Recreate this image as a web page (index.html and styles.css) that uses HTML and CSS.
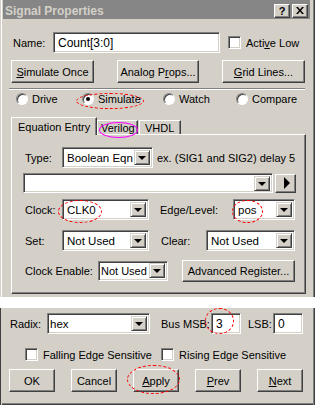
FILE: index.html
```html
<!DOCTYPE html>
<html>
<head>
<meta charset="utf-8">
<link rel="stylesheet" href="styles.css">
</head>
<body>
<div class="win">
  <div class="upper">
    <div class="titlebar">
      <span class="title">Signal Properties</span>
      <div class="tbtns">
        <span class="tbtn q">?</span>
        <span class="tbtn"><svg width="8" height="7" viewBox="0 0 8 7"><path d="M0 0h2l2 2.5L6 0h2L5 3.5 8 7H6L4 4.5 2 7H0l3-3.5z" fill="#000"/></svg></span>
      </div>
    </div>
    <div class="row name-row">
      <span class="lbl w-name">Name:</span>
      <div class="field name-field">Count[3:0]</div>
      <span class="check ml8"></span><span class="ml5">Acti<u>v</u>e Low</span>
    </div>
    <div class="row btn-row">
      <div class="btn b-sim"><span><u>S</u>imulate Once</span></div>
      <div class="btn b-ana"><span>Analog P<u>r</u>ops...</span></div>
      <div class="btn b-grid"><span><u>G</u>rid Lines...</span></div>
    </div>
    <div class="sep"></div>
    <div class="row radio-row">
      <div class="ritem r-drive"><span class="radio"></span>Drive</div>
      <div class="ritem r-sim"><span class="radio on"></span>Simulate</div>
      <div class="ritem r-watch"><span class="radio"></span>Watch</div>
      <div class="ritem"><span class="radio"></span>Compare</div>
    </div>
    <div class="tabs">
      <div class="tab sel">Equation Entry</div>
      <div class="tab t-ver">Verilog</div>
      <div class="tab t-vhdl">VHDL</div>
    </div>
    <div class="panel">
      <div class="prow type-row">
        <span class="lbl w-type">Type:</span>
        <div class="combo c-type"><span class="ctext">Boolean Eqn</span><span class="arrow"></span></div>
        <span class="ml4">ex. (SIG1 and SIG2) delay 5</span>
      </div>
      <div class="prow wide-row">
        <div class="combo c-wide"><span class="ctext"></span><span class="arrow"></span></div>
        <div class="btn play"><span class="tri-r"></span></div>
      </div>
      <div class="prow clock-row">
        <span class="lbl w-type">Clock:</span>
        <div class="combo c-clk"><span class="ctext">CLK0</span><span class="arrow"></span></div>
        <span class="lbl w-edge ml11">Edge/Level:</span>
        <div class="combo c-edge"><span class="ctext">pos</span><span class="arrow"></span></div>
      </div>
      <div class="prow set-row">
        <span class="lbl w-type">Set:</span>
        <div class="combo c-clk"><span class="ctext">Not Used</span><span class="arrow"></span></div>
        <span class="lbl w-clear ml12">Clear:</span>
        <div class="combo c-clear"><span class="ctext">Not Used</span><span class="arrow"></span></div>
      </div>
      <div class="prow ce-row">
        <span class="lbl w-ce">Clock Enable:</span>
        <div class="combo c-ce"><span class="ctext">Not Used</span><span class="arrow"></span></div>
        <div class="btn b-adv"><span>Advanced Register...</span></div>
      </div>
    </div>
  </div>
  <div class="gap"></div>
  <div class="lower">
    <div class="row radix-row">
      <span class="lbl w-radix">Radix:</span>
      <div class="combo c-radix"><span class="ctext">hex</span><span class="arrow"></span></div>
      <span class="lbl w-msb ml11">Bus MSB:</span>
      <div class="field f-num">3</div>
      <span class="lbl w-lsb ml7">LSB:</span>
      <div class="field f-num">0</div>
    </div>
    <div class="row chk-row">
      <span class="check ml25"></span><span class="ml5 w-fall">Falling Edge Sensitive</span>
      <span class="check"></span><span class="ml5">Rising Edge Sensitive</span>
    </div>
    <div class="row bot-btns">
      <div class="btn bb"><span>OK</span></div>
      <div class="btn bb"><span>Cancel</span></div>
      <div class="btn bb"><span><u>A</u>pply</span></div>
      <div class="btn bb"><span><u>P</u>rev</span></div>
      <div class="btn bb"><span><u>N</u>ext</span></div>
    </div>
  </div>
  <div class="ring red e-sim"></div>
  <div class="ring mag e-ver"></div>
  <div class="ring red e-clk"></div>
  <div class="ring red e-pos"></div>
  <div class="ring red e-msb"></div>
  <div class="ring red e-apply"></div>
</div>
</body>
</html>
```
FILE: styles.css
```css
html, body { margin: 0; padding: 0; background: #fff; }
.win {
  position: relative;
  width: 315px;
  height: 405px;
  font: 11px "Liberation Sans", Arial, sans-serif;
  color: #000;
  background: #fff;
  white-space: nowrap;
}
.upper {
  height: 297px;
  background: #d4d0c8;
  box-shadow: inset 1px 0 #d4d0c8, inset 2px 0 #fff, inset -1px 0 #404040, inset -2px 0 #808080;
  overflow: hidden;
}
.gap { height: 10px; background: #fff; }
.lower {
  height: 98px;
  background: #d4d0c8;
  box-sizing: border-box;
  border-top: 1px solid #fff;
  box-shadow: inset 1px 0 #404040, inset 2px 0 #d4d0c8, inset -1px 0 #404040, inset -2px 0 #808080, inset 0 -1px #404040, inset 0 -2px #808080;
  padding-top: 5px;
}
.titlebar {
  height: 19px;
  margin: 0 5px 1px 3px;
  background: #868686;
  display: flex;
  align-items: center;
  justify-content: space-between;
}
.title { color: #d4d0c8; font-weight: bold; margin-left: 2px; margin-top: 2px; font-size: 12px; }
.tbtns { display: flex; gap: 2px; margin-right: 2px; margin-top: 2px; }
.tbtn {
  width: 14px; height: 12px;
  display: flex; align-items: center; justify-content: center;
  background: #d4d0c8;
  border: 1px solid; border-color: #fff #404040 #404040 #fff;
  box-shadow: inset -1px -1px #808080;
  font-weight: bold; font-size: 11px; line-height: 12px;
}
.row { display: flex; align-items: center; }
.lbl { flex: none; }
.ml4 { margin-left: 4px; } .ml5 { margin-left: 5px; } .ml7 { margin-left: 7px; }
.ml8 { margin-left: 8px; } .ml11 { margin-left: 11px; } .ml12 { margin-left: 12px; }
.ml25 { margin-left: 25px; }

.field {
  box-sizing: border-box;
  background: #fff;
  border: 1px solid; border-color: #808080 #fff #fff #808080;
  box-shadow: inset 1px 1px #404040, inset -1px -1px #d4d0c8;
  padding-left: 4px;
  display: flex; align-items: center;
  height: 21px;
  font-size: 12px;
}
.check {
  flex: none;
  width: 13px; height: 13px; box-sizing: border-box;
  background: #fff;
  border: 1px solid; border-color: #808080 #fff #fff #808080;
  box-shadow: inset 1px 1px #404040, inset -1px -1px #d4d0c8;
}
.btn {
  flex: none;
  box-sizing: border-box;
  background: #d4d0c8;
  border: 1px solid; border-color: #fff #404040 #404040 #fff;
  box-shadow: inset -1px -1px #808080;
  display: flex; align-items: center; justify-content: center;
}
.name-row { margin-top: 13px; padding-left: 13px; height: 21px; }
.w-name { width: 40px; }
.name-field { width: 167px; }

.btn-row { margin-top: 7px; height: 23px; padding-left: 11px; gap: 23px; }
.btn-row .btn { height: 23px; }
.b-sim { width: 83px; } .b-ana { width: 82px; } .b-grid { width: 83px; }

.sep { margin: 5px 10px 0 9px; border-top: 1px solid #808080; border-bottom: 1px solid #fff; height: 0; }

.radio-row { margin-top: 3px; height: 12px; padding-left: 16px; }
.ritem { display: flex; align-items: center; flex: none; }
.r-drive { width: 66px; } .r-sim { width: 81px; } .r-watch { width: 73px; }
.radio {
  position: relative;
  width: 12px; height: 12px; box-sizing: border-box;
  border-radius: 50%;
  background: #fff;
  border: 1px solid; border-color: #808080 #fff #fff #808080;
  box-shadow: inset 1px 1px #404040;
  margin-right: 4px;
  flex: none;
}
.radio.on::after {
  content: ""; position: absolute; left: 3px; top: 3px;
  width: 4px; height: 4px; border-radius: 50%; background: #000;
}

.tabs { margin-top: 12px; height: 17px; padding-left: 11px; display: flex; align-items: flex-end; }
.tab {
  box-sizing: border-box;
  height: 14px;
  border: 1px solid; border-bottom: none;
  border-color: #fff #404040 transparent #fff;
  box-shadow: inset -1px 0 #808080;
  padding-left: 5px;
  display: flex; align-items: center;
}
.tab.sel { width: 86px; padding-left: 6px; position: relative; z-index: 1; margin-bottom: -1px; height: 18px; background: #d4d0c8; }
.t-ver { width: 41px; padding-left: 3px; }
.t-vhdl { width: 42px; margin-left: 1px; padding-left: 5px; }

.panel {
  box-sizing: border-box;
  margin-left: 11px;
  width: 295px;
  height: 160px;
  border: 1px solid; border-color: #fff #404040 #404040 #fff;
  box-shadow: inset -1px -1px #808080;
  padding-top: 12px;
}
.prow { display: flex; align-items: center; padding-left: 13px; height: 21px; }
.w-type { width: 37px; }
.w-edge { width: 73px; }
.w-clear { width: 45px; }
.w-ce { width: 73px; }

.combo {
  flex: none;
  box-sizing: border-box;
  height: 21px;
  background: #fff;
  border: 1px solid; border-color: #808080 #fff #fff #808080;
  box-shadow: inset 1px 1px #404040, inset -1px -1px #d4d0c8;
  display: flex; align-items: center;
  padding: 2px;
}
.ctext { flex: 1; padding-left: 2px; white-space: nowrap; overflow: hidden; font-size: 11.5px; }
.arrow {
  flex: none;
  width: 16px; height: 15px; box-sizing: border-box;
  background: #d4d0c8;
  border: 1px solid; border-color: #d4d0c8 #404040 #404040 #d4d0c8;
  box-shadow: inset 1px 1px #fff, inset -1px -1px #808080;
  display: flex; align-items: center; justify-content: center;
}
.arrow::after {
  content: ""; width: 0; height: 0;
  border-left: 4px solid transparent; border-right: 4px solid transparent;
  border-top: 4px solid #000; margin-top: 1px;
}
.c-type { width: 91px; }
.wide-row { margin-top: 5px; height: 20px; padding-left: 11px; }
.c-wide { width: 250px; height: 20px; }
.play { width: 21px; height: 19px; margin-left: 2px; }
.tri-r { width: 0; height: 0; border-top: 6px solid transparent; border-bottom: 6px solid transparent; border-left: 6px solid #000; margin-left: 2px; }
.clock-row { margin-top: 6px; }
.set-row { margin-top: 10px; }
.ce-row { margin-top: 9px; }
.c-clk { width: 87px; }
.c-edge { width: 62px; }
.c-clear { width: 89px; }
.c-ce { width: 70px; height: 20px; }
.c-ce .ctext { padding-left: 0; font-size: 11px; }
.b-adv { width: 113px; height: 22px; margin-left: 14px; }

.radix-row { padding-left: 10px; height: 21px; }
.w-radix { width: 37px; }
.c-radix { width: 103px; }
.c-radix .ctext { padding-left: 0; }
.w-msb { width: 50px; }
.w-lsb { width: 25px; }
.f-num { width: 30px; }
.chk-row { margin-top: 14px; height: 13px; }
.w-fall { width: 118px; }
.bot-btns { margin-top: 8px; padding-left: 9px; gap: 16px; }
.bb { width: 46px; height: 23px; }

.ring { position: absolute; border-radius: 50%; box-sizing: border-box; }
.ring.red { border: 1px dashed #ff0000; }
.ring.mag { border: 1px solid #ff00ff; }
.e-sim { left: 76px; top: 93px; width: 68px; height: 16px; }
.e-ver { left: 99px; top: 122px; width: 39px; height: 16px; z-index: 2; }
.e-clk { left: 58px; top: 200px; width: 44px; height: 23px; }
.e-pos { left: 232px; top: 200px; width: 31px; height: 23px; }
.e-msb { left: 205px; top: 308px; width: 29px; height: 26px; }
.e-apply { left: 127px; top: 365px; width: 53px; height: 29px; }
```
